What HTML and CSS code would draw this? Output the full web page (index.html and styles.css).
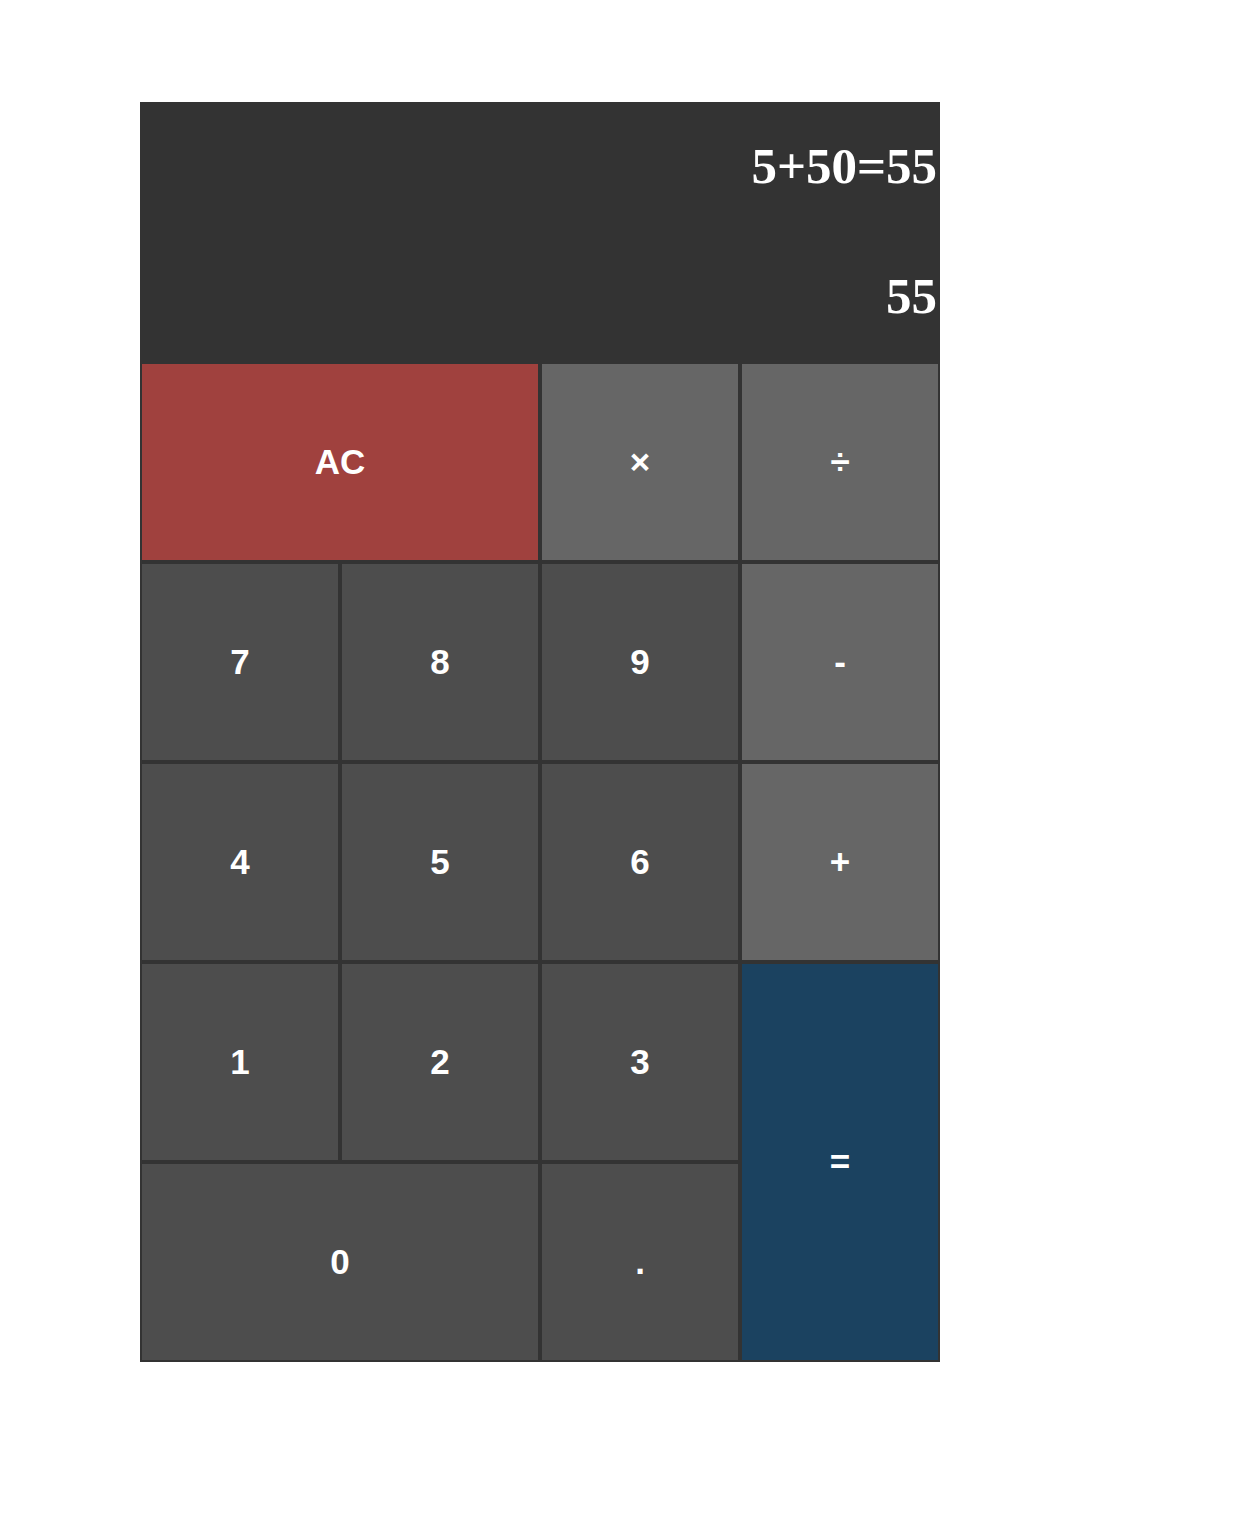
FILE: index.html
```html
<!DOCTYPE html>
<html>
<head>
<meta charset="utf-8">
<link rel="stylesheet" href="styles.css">
</head>
<body>
<div class="calculator">
  <div class="display">
    <div class="history">5+50=55</div>
    <div class="current">55</div>
  </div>
  <div class="keys">
    <button class="key clear span-2">AC</button>
    <button class="key op">×</button>
    <button class="key op">÷</button>
    <button class="key">7</button>
    <button class="key">8</button>
    <button class="key">9</button>
    <button class="key op">-</button>
    <button class="key">4</button>
    <button class="key">5</button>
    <button class="key">6</button>
    <button class="key op">+</button>
    <button class="key">1</button>
    <button class="key">2</button>
    <button class="key">3</button>
    <button class="key equals">=</button>
    <button class="key span-2">0</button>
    <button class="key">.</button>
  </div>
</div>
</body>
</html>
```

FILE: styles.css
```css
html, body {
  margin: 0;
  padding: 0;
  background: #ffffff;
}

.calculator {
  width: 800px;
  margin: 102px 0 0 140px;
  background: #333333;
}

.display {
  height: 260px;
  box-sizing: border-box;
  padding: 37px 3px 0 0;
  display: flex;
  flex-direction: column;
  align-items: flex-end;
  gap: 75px;
  color: #ffffff;
  font-family: "Liberation Serif", "Times New Roman", serif;
  font-weight: bold;
  font-size: 51px;
}

.history, .current {
  line-height: 55px;
}

.keys {
  display: grid;
  grid-template-columns: repeat(4, 200px);
  grid-auto-rows: 200px;
}

.key {
  box-sizing: border-box;
  margin: 0;
  border: 2px solid #333333;
  background: #4d4d4d;
  color: #ffffff;
  font-family: "Liberation Sans", Arial, sans-serif;
  font-weight: bold;
  font-size: 35px;
  padding: 0;
  cursor: pointer;
}

.span-2 {
  grid-column: span 2;
}

.clear {
  background: #a0413e;
}

.op {
  background: #666666;
}

.equals {
  grid-column: 4;
  grid-row: 4 / span 2;
  background: #1b4260;
}
```
